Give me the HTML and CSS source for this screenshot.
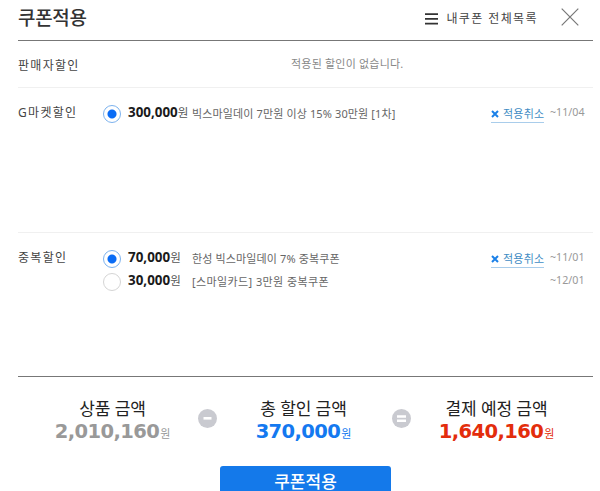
FILE: index.html
```
<!DOCTYPE html>
<html lang="ko">
<head>
  <meta charset="UTF-8" />
  <meta name="viewport" content="width=device-width, initial-scale=1.0"/>
  <title>쿠폰적용</title>
  <link rel="stylesheet" href="styles.css">
</head>
<body>
  <div class="coupon-layer">
    <header class="layer-header">
      <h1>쿠폰적용</h1>
      <a class="all-coupons">
        <svg width="13" height="12" viewBox="0 0 13 12"><path d="M0 1.2h13M0 5.9h13M0 10.6h13" stroke="#333" stroke-width="1.8"/></svg>
        <span>내쿠폰 전체목록</span>
      </a>
      <button class="close" aria-label="닫기">
        <svg width="18" height="18" viewBox="0 0 18 18"><path d="M.7.7l16.6 16.6M17.3.7L.7 17.3" stroke="#777" stroke-width="1.2"/></svg>
      </button>
    </header>

    <section class="group seller">
      <h2>판매자할인</h2>
      <p class="empty">적용된 할인이 없습니다.</p>
    </section>

    <section class="group">
      <h2>G마켓할인</h2>
      <ul>
        <li>
          <span class="radio on"></span>
          <span class="price"><b>300,000</b>원</span>
          <span class="name">빅스마일데이 7만원 이상 15% 30만원 [1차]</span>
          <a class="cancel"><svg width="8" height="8" viewBox="0 0 8 8"><path d="M1 1l6 6M7 1L1 7" stroke="#1b80e8" stroke-width="2"/></svg><span>적용취소</span></a>
          <span class="date">~11/04</span>
        </li>
      </ul>
    </section>

    <section class="group last">
      <h2>중복할인</h2>
      <ul>
        <li>
          <span class="radio on"></span>
          <span class="price"><b>70,000</b>원</span>
          <span class="name">한성 빅스마일데이 7% 중복쿠폰</span>
          <a class="cancel"><svg width="8" height="8" viewBox="0 0 8 8"><path d="M1 1l6 6M7 1L1 7" stroke="#1b80e8" stroke-width="2"/></svg><span>적용취소</span></a>
          <span class="date">~11/01</span>
        </li>
        <li>
          <span class="radio"></span>
          <span class="price"><b>30,000</b>원</span>
          <span class="name card">[스마일카드] 3만원 중복쿠폰</span>
          <span class="date">~12/01</span>
        </li>
      </ul>
    </section>

    <div class="summary">
      <dl class="total">
        <dt>상품 금액</dt>
        <dd><b>2,010,160</b>원</dd>
      </dl>
      <svg class="sign" width="19" height="19" viewBox="0 0 19 19"><circle cx="9.5" cy="9.5" r="9.5" fill="#c9cad0"/><path d="M5.5 9.3h8" stroke="#fff" stroke-width="2.6"/></svg>
      <dl class="discount">
        <dt>총 할인 금액</dt>
        <dd><b>370,000</b>원</dd>
      </dl>
      <svg class="sign" width="19" height="19" viewBox="0 0 19 19"><circle cx="9.5" cy="9.5" r="9.5" fill="#c9cad0"/><path d="M5 7.5h9M5 11.8h9" stroke="#fff" stroke-width="2.4"/></svg>
      <dl class="payment">
        <dt>결제 예정 금액</dt>
        <dd><b>1,640,160</b>원</dd>
      </dl>
    </div>

    <button class="apply">쿠폰적용</button>
  </div>
</body>
</html>
```
FILE: styles.css
```
* {
  box-sizing: border-box;
  margin: 0;
  padding: 0;
}

body {
  height: 491px;
  overflow: hidden;
  background: #fff;
  color: #444;
  font-family: "Noto Sans", "Noto Sans CJK KR", sans-serif;
}

ul {
  list-style: none;
}

svg {
  display: block;
  flex: none;
}

button {
  border: none;
  background: none;
  font-family: inherit;
}

.coupon-layer {
  padding: 0 7px 0 18px;
}

.layer-header {
  display: flex;
  height: 41px;
  border-bottom: 1px solid #777;
}

.layer-header h1 {
  flex: 1;
  padding-top: 4px;
  font-size: 19px;
  font-weight: 500;
  line-height: 28px;
  letter-spacing: -0.3px;
  color: #333;
}

.all-coupons {
  display: flex;
  gap: 8px;
  padding-top: 9px;
  font-size: 12px;
  line-height: 20px;
  letter-spacing: 1.4px;
}

.all-coupons svg {
  margin-top: 4px;
}

.close {
  align-self: flex-start;
  margin: 8px 14px 0 23px;
}

.group {
  display: flex;
  height: 145px;
  padding-top: 14px;
  border-bottom: 1px solid #f0f0f0;
}

.group.seller {
  height: 47px;
}

.group.last {
  height: 144px;
  border-bottom: 1px solid #777;
}

.group h2 {
  width: 85px;
  font-size: 12px;
  font-weight: 400;
  line-height: 21px;
  letter-spacing: 1.3px;
}

.empty {
  flex: 1;
  padding-left: 188px;
  font-size: 11px;
  line-height: 18px;
  letter-spacing: 0.2px;
  color: #888;
}

.group ul {
  flex: 1;
}

.group li {
  display: flex;
  height: 23px;
}

.radio {
  flex: none;
  width: 18px;
  height: 18px;
  margin: 3px 7px 0 0;
  border: 1px solid #d5d5d5;
  border-radius: 50%;
}

.radio.on {
  border-color: #7cb2ee;
  background: radial-gradient(circle, #0a6cf5 4px, #fff 5px);
}

.price {
  width: 64px;
  font-size: 11.5px;
  line-height: 20px;
  color: #555;
  white-space: nowrap;
}

.price b {
  font-size: 13.4px;
  color: #1a1a1a;
}

.name {
  flex: 1;
  padding-top: 3px;
  font-size: 11px;
  line-height: 17px;
  letter-spacing: 0.13px;
  color: #666;
  white-space: nowrap;
}

.name.card {
  letter-spacing: 0.4px;
}

.cancel {
  display: flex;
  align-items: center;
  gap: 4px;
  width: 53px;
  height: 17px;
  margin-top: 4px;
  border-bottom: 1px solid #a9cdeb;
  font-size: 11px;
  line-height: 16px;
  letter-spacing: 0.2px;
  color: #3f8cc4;
  white-space: nowrap;
}

.date {
  width: 49px;
  padding-left: 6px;
  font-size: 10.7px;
  line-height: 20px;
  color: #999;
}

.summary {
  display: flex;
  height: 89px;
  padding-top: 21px;
}

.summary dl {
  text-align: center;
  white-space: nowrap;
}

.summary dt {
  font-size: 17px;
  line-height: 22px;
  letter-spacing: -0.1px;
  color: #222;
}

.summary dd {
  font-size: 11px;
  line-height: 24px;
}

.summary b {
  margin-right: 1px;
  font-family: "DejaVu Sans", sans-serif;
  font-size: 19.5px;
  letter-spacing: -0.6px;
}

.sign {
  flex: none;
  margin-top: 11px;
}

.total {
  width: 180px;
  padding-left: 9px;
}

.total dd {
  color: #999;
}

.discount {
  width: 175px;
  padding-right: 2px;
}

.discount dd {
  color: #1479f0;
}

.payment {
  width: 171px;
}

.payment dd {
  color: #e32d0c;
}

.apply {
  display: block;
  width: 171px;
  height: 44px;
  margin-left: 202px;
  padding-bottom: 12px;
  border-radius: 3px;
  background: #1479ea;
  color: #fff;
  font-size: 17px;
  font-weight: 500;
  line-height: 32px;
}
```
